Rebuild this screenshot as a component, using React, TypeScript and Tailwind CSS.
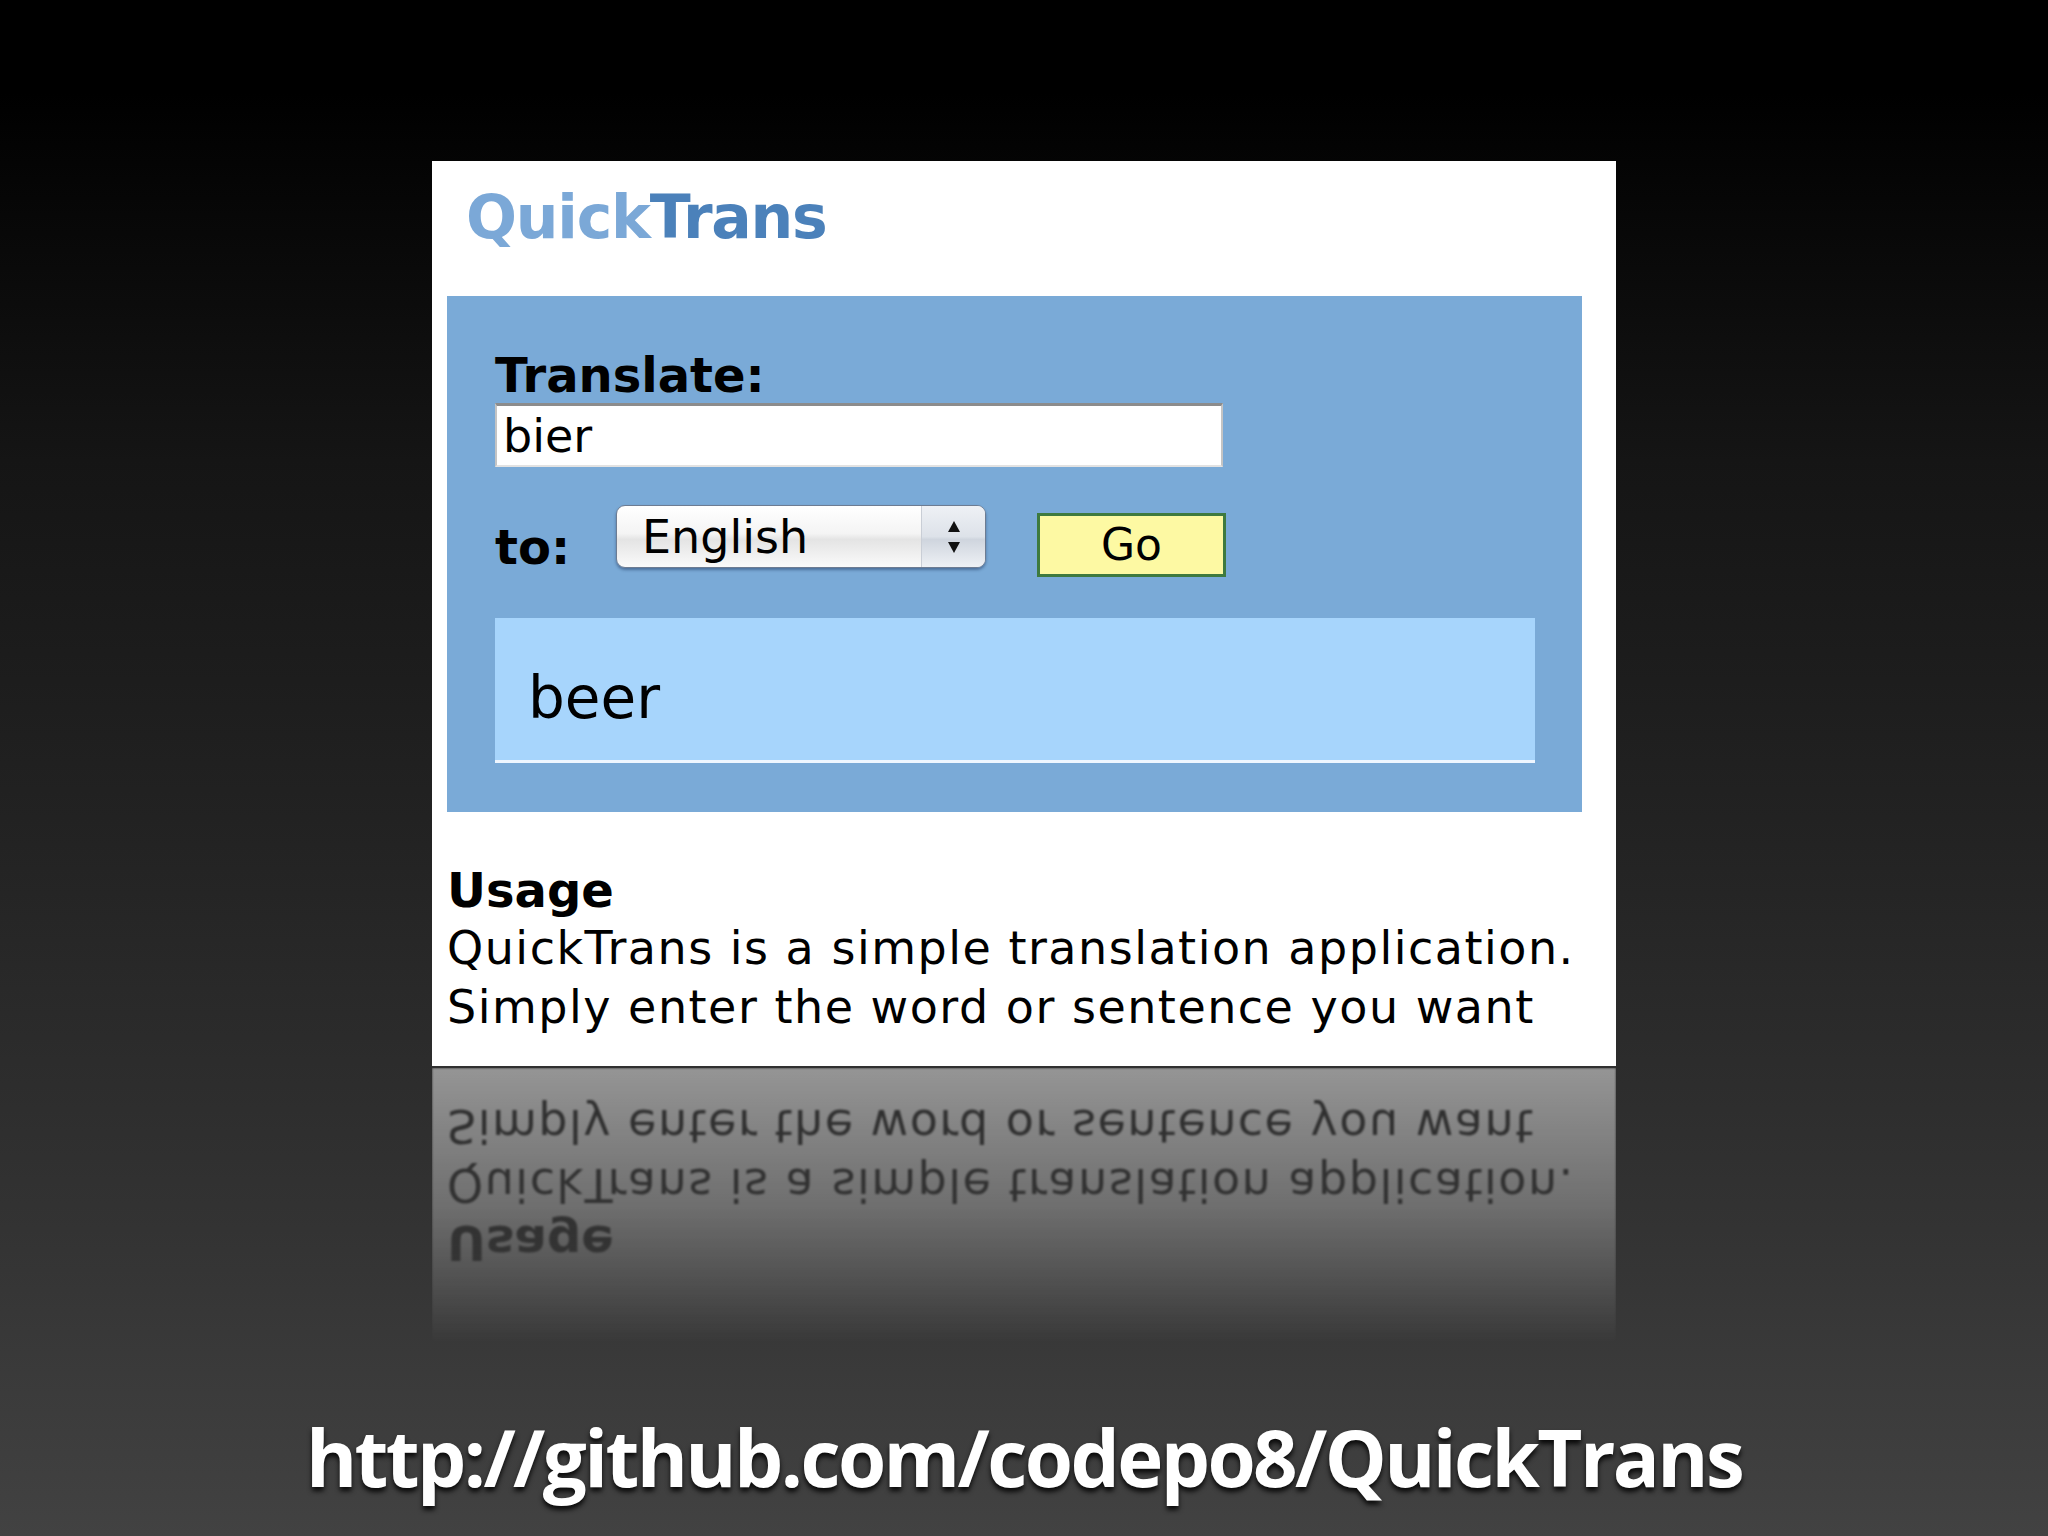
import React from "react";

function UsageSection() {
  return (
    <div className="pl-[15px] pt-[49px] pb-[28px] whitespace-nowrap">
      <div className="text-[48px] leading-[58px] font-bold">Usage</div>
      <div className="text-[46px] leading-[59px] tracking-[1.5px]">
        QuickTrans is a simple translation application.
      </div>
      <div className="text-[46px] leading-[59px] tracking-[1.5px]">
        Simply enter the word or sentence you want
      </div>
    </div>
  );
}

function SelectArrows() {
  return (
    <svg width="18" height="38" viewBox="0 0 18 38" className="block">
      <path d="M9 3 L15 14 L3 14 Z" fill="#111" />
      <path d="M9 35 L15 24 L3 24 Z" fill="#111" />
    </svg>
  );
}

export default function App() {
  return (
    <div className="w-[2048px] h-[1536px] overflow-hidden flex flex-col items-center pt-[161px] font-['DejaVu_Sans',sans-serif] bg-[linear-gradient(to_bottom,#000_0%,#000_6%,#151515_30%,#232323_55%,#333_80%,#424242_100%)]">
      {/* Card */}
      <div className="w-[1184px] h-[905px] bg-white overflow-hidden flex flex-col shrink-0 text-black">
        {/* Header */}
        <div className="h-[135px] pl-[34px] pt-[26px] shrink-0">
          <div className="text-[60px] leading-none font-bold tracking-[-1.2px] whitespace-nowrap">
            <span className="text-[#7ba8d7]">Quick</span>
            <span className="text-[#4b81ba]">Trans</span>
          </div>
        </div>

        {/* Blue panel */}
        <div className="ml-[15px] w-[1135px] h-[516px] bg-[#7aaad7] px-[48px] pt-[55px] shrink-0 flex flex-col">
          <div className="text-[48px] leading-none font-bold text-black whitespace-nowrap">Translate:</div>
          <div className="mt-[4px] w-[728px] h-[64px] bg-white border-t-[3px] border-t-[#8c8c8c] border-x-2 border-x-[#c4c4c4] border-b-2 border-b-[#e2e2e2] flex items-center pl-[6px]">
            <span className="text-[46px] leading-none text-black">bier</span>
          </div>

          <div className="mt-[38px] flex items-start">
            <div className="w-[121px] mt-[18px] text-[48px] leading-none font-bold text-black">to:</div>
            <div className="w-[370px] h-[63px] rounded-[9px] border border-[#6d7c92] shadow-[0_2px_3px_rgba(20,40,80,0.45)] bg-[linear-gradient(to_bottom,#ffffff_0%,#f4f4f4_45%,#e4e4e4_55%,#fafafa_100%)] flex overflow-hidden">
              <div className="flex-1 flex items-center pl-[25px]">
                <span className="text-[46px] leading-none text-black">English</span>
              </div>
              <div className="w-[64px] h-full border-l border-l-[#c9ced6] bg-[linear-gradient(to_bottom,#eef1f5_0%,#dde2e9_50%,#cfd5de_55%,#eef1f5_100%)] flex items-center justify-center">
                <SelectArrows />
              </div>
            </div>
            <div className="ml-[51px] mt-[8px] w-[189px] h-[64px] bg-[#fdf9a3] border-[3px] border-[#3e7a3e] flex items-center justify-center">
              <span className="text-[44px] leading-none text-black">Go</span>
            </div>
          </div>

          <div className="mt-[41px] w-[1040px] h-[145px] bg-[#a7d5fc] border-b-[3px] border-b-[#eef6ff] pl-[33px] pt-[51px]">
            <div className="text-[58px] leading-none text-black">beer</div>
          </div>
        </div>

        <UsageSection />
      </div>

      {/* Reflection */}
      <div className="w-[1184px] h-[277px] shrink-0 overflow-hidden border-t-2 border-t-[#303030] [mask-image:linear-gradient(to_bottom,#000_0%,rgba(0,0,0,0.6)_50%,transparent_100%)]">
        <div className="h-[275px] bg-white opacity-[0.5] blur-[1px] flex flex-col justify-end [transform:scaleY(-1)] text-[#333]">
          <UsageSection />
        </div>
      </div>

      {/* URL */}
      <div className="mt-[75px] text-[78px] leading-none font-bold text-white tracking-[-2.6px] whitespace-nowrap font-['Open_Sans',sans-serif] [text-shadow:0_4px_5px_rgba(0,0,0,0.85)]">
        http://github.com/codepo8/QuickTrans
      </div>
    </div>
  );
}
